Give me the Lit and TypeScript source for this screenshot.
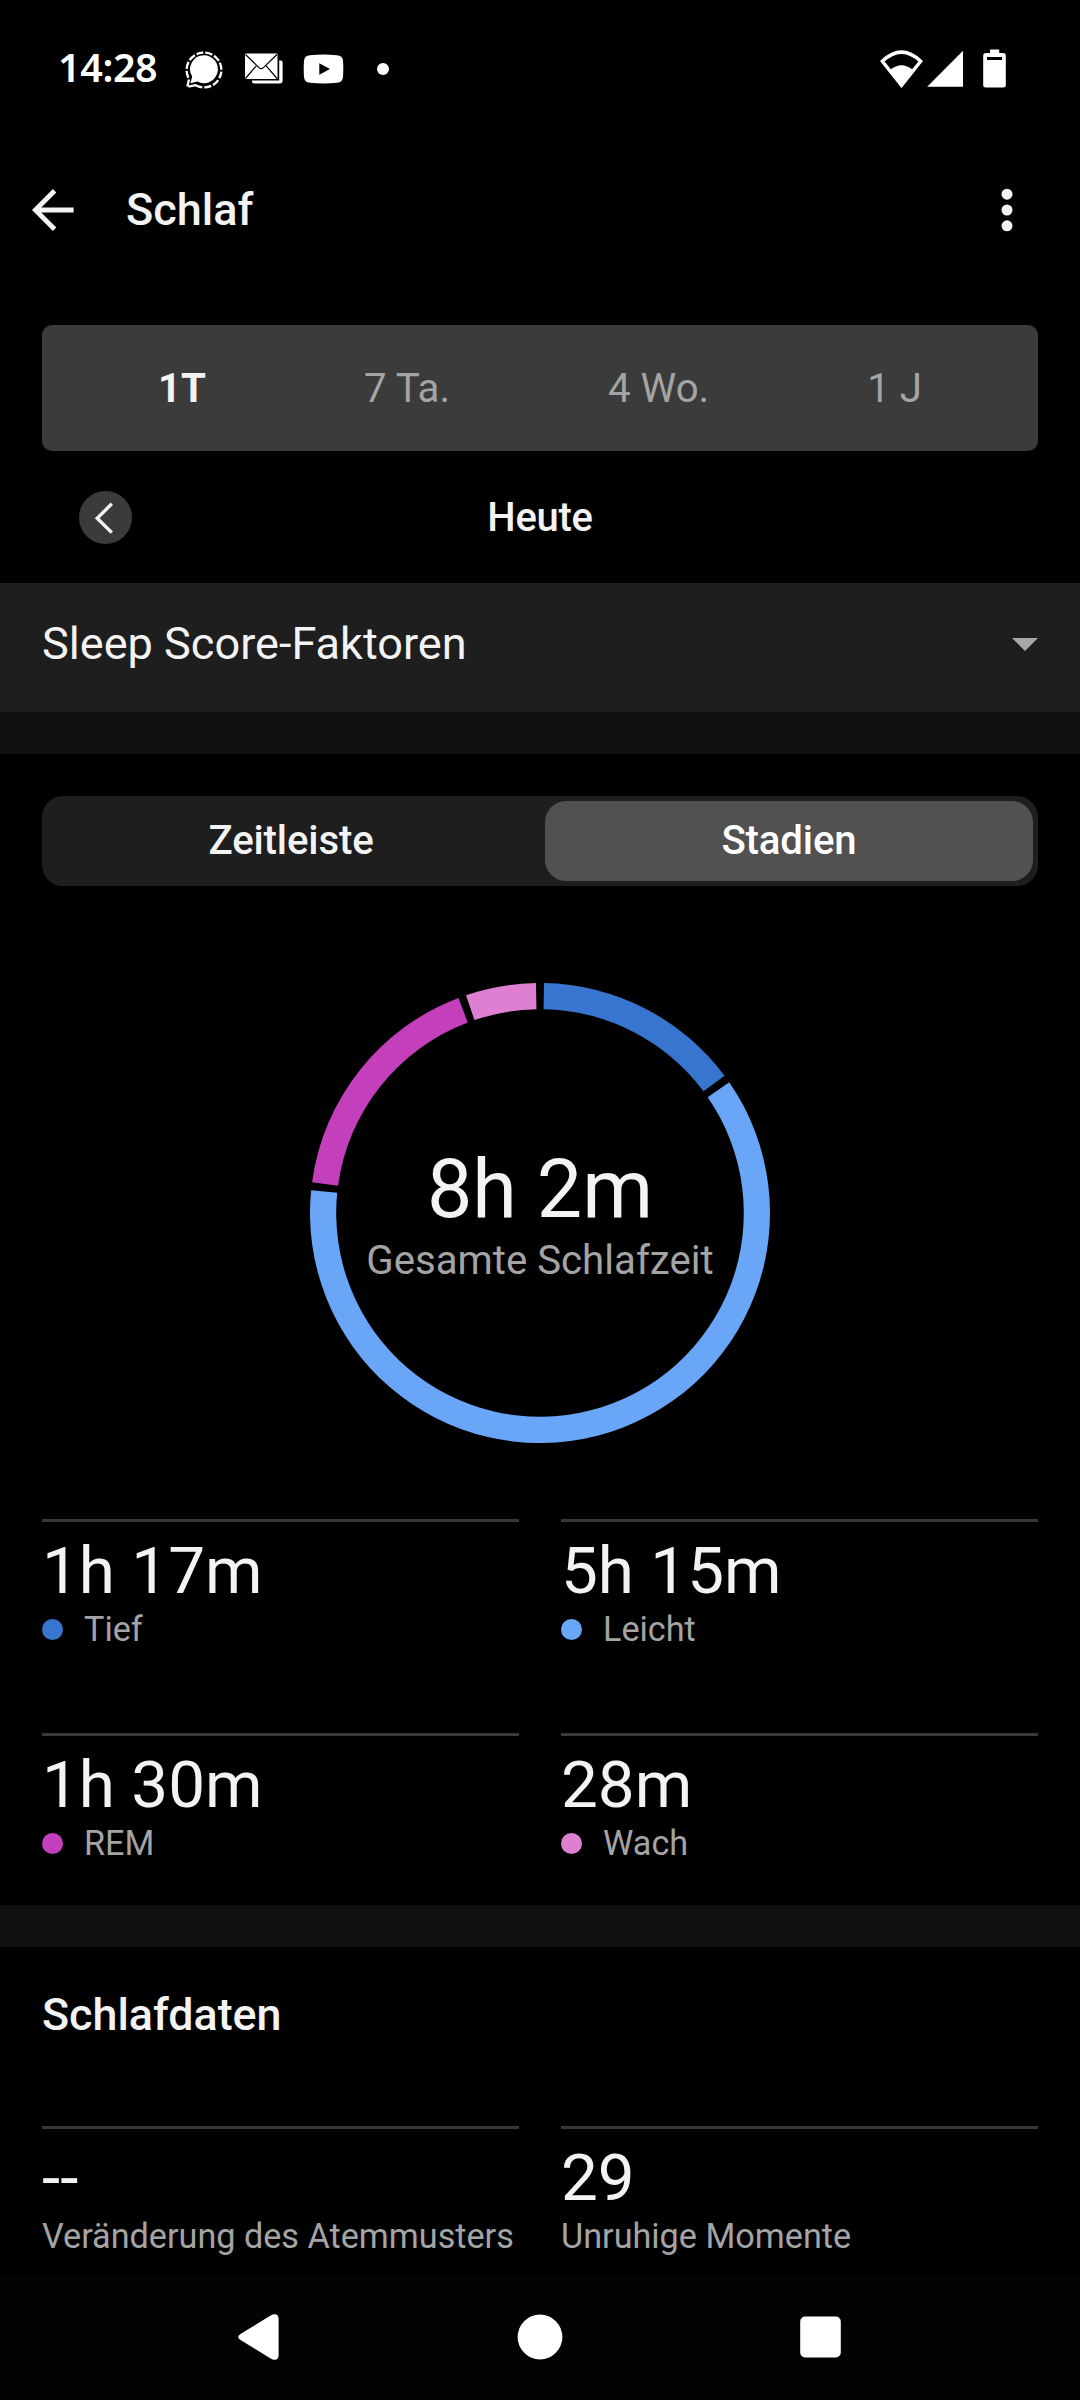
import { LitElement, html, css, svg } from "lit";
import { customElement, property } from "lit/decorators.js";

interface Stage {
  label: string;
  value: string;
  minutes: number;
  color: string;
}

const STAGES: Stage[] = [
  { label: "Tief", value: "1h 17m", minutes: 77, color: "#3875cf" },
  { label: "Leicht", value: "5h 15m", minutes: 315, color: "#6aa6f8" },
  { label: "REM", value: "1h 30m", minutes: 90, color: "#c43fbc" },
  { label: "Wach", value: "28m", minutes: 28, color: "#df7fd2" },
];

const PERIODS = ["1T", "7 Ta.", "4 Wo.", "1 J"];

@customElement("status-bar")
class StatusBar extends LitElement {
  static styles = css`
    :host {
      display: flex;
      align-items: center;
      height: 137px;
      padding: 0 74px 0 58px;
      box-sizing: border-box;
      color: #fff;
    }
    .time {
      width: 127px;
      padding-bottom: 4px;
      font: 600 39.5px/60px "Noto Sans", "Open Sans", sans-serif;
      letter-spacing: -0.4px;
      white-space: nowrap;
    }
    svg {
      display: block;
      flex: none;
    }
    .left {
      display: flex;
      align-items: center;
      gap: 20.5px;
    }
    .more {
      width: 12px;
      height: 12px;
      margin-left: 12.5px;
      border-radius: 50%;
      background: #fff;
    }
    .right {
      display: flex;
      align-items: center;
      margin-left: auto;
    }
    .cell {
      margin-left: 4px;
    }
    .battery {
      margin-left: 19px;
    }
  `;
  render() {
    return html`
      <span class="time">14:28</span>
      <div class="left">
        <svg width="38" height="40" viewBox="0 0 38 40">
          <path
            d="M19 6.2a14 14 0 1 1-6.6 26.4L5.4 34.3l1.8-6.7A14 14 0 0 1 19 6.2z"
            fill="#fff"
          />
          <path
            d="M10.5 36.2L2.2 38l1.9-8A17.4 17.4 0 1 1 10.5 36.2z"
            fill="none"
            stroke="#fff"
            stroke-width="2.3"
            stroke-dasharray="7.2 1.9"
          />
        </svg>
        <svg width="39" height="31" viewBox="0 0 39 31">
          <path d="M8 27.5h27.2V7.5H37a1.6 1.6 0 0 1 1.6 1.6v18.4a3 3 0 0 1-3 3H10a2.5 2.5 0 0 1-2-3z" fill="#fff" />
          <rect x="1" y="0.5" width="32.5" height="25.5" rx="1" fill="#fff" />
          <path
            d="M1.5 1.5L15 14.6q2.2 2 4.4 0L33 1.5M1.5 25.5L12.2 12.8M33 25.5L22.2 12.8"
            fill="none"
            stroke="#000"
            stroke-width="1.2"
          />
        </svg>
        <svg width="41" height="30" viewBox="0 0 41 30">
          <path
            d="M7 1.2q13.500-1.400 27 0Q39.600 1.400 40 7q.6 8 0 16-.4 5.600-6 5.800-13.500 1.400-27 0-5.600-.2-6-5.800-.6-8 0-16 .4-5.600 6-5.800z"
            fill="#fff"
          />
          <path d="M16.300 9.300v11.400L27 15z" fill="#000" />
        </svg>
        <span class="more"></span>
      </div>
      <div class="right">
        <svg width="43" height="38" viewBox="0 0 43 38">
          <path
            d="M2.300 11.200Q21.500-7 40.700 11.200L21.500 35.400z"
            fill="none"
            stroke="#fff"
            stroke-width="3.400"
          />
          <path d="M10.300 19.800Q21.500 10.600 32.700 19.800L21.500 36z" fill="#fff" />
        </svg>
        <svg class="cell" width="37" height="38" viewBox="0 0 37 38">
          <path d="M36 .8v36H.2z" fill="#fff" />
        </svg>
        <svg class="battery" width="23" height="39" viewBox="0 0 23 39">
          <path
            d="M7 .5h9.200V4H20a2.800 2.800 0 0 1 2.800 2.800v29.200a2.500 2.500 0 0 1-2.500 2.500H2.700A2.500 2.500 0 0 1 .2 36V6.800A2.800 2.800 0 0 1 3 4h4z"
            fill="#fff"
          />
          <path d="M4 8h15v3H4z" fill="#000" />
        </svg>
      </div>
    `;
  }
}

@customElement("sleep-donut")
class SleepDonut extends LitElement {
  @property({ attribute: false }) stages: Stage[] = [];

  static styles = css`
    :host {
      display: grid;
      width: 460px;
      height: 460px;
      justify-items: center;
    }
    .ring,
    .center {
      grid-area: 1 / 1;
    }
    .center {
      padding-top: 159px;
      text-align: center;
      white-space: nowrap;
    }
    .total {
      font-size: 80.8px;
      line-height: 95px;
      color: #f3f3f3;
    }
    .caption {
      font-size: 40.2px;
      line-height: 48px;
      color: #a4a4a4;
    }
  `;

  private arc(from: number, to: number, color: string) {
    const at = (deg: number, r: number) => {
      const a = (deg * Math.PI) / 180;
      return `${(230 + r * Math.sin(a)).toFixed(2)} ${(230 - r * Math.cos(a)).toFixed(2)}`;
    };
    const large = to - from > 180 ? 1 : 0;
    return svg`<path d="M${at(from, 230)}A230 230 0 ${large} 1 ${at(to, 230)}L${at(to, 203.8)}A203.800 203.800 0 ${large} 0 ${at(from, 203.8)}z" fill=${color} />`;
  }

  render() {
    const sum = this.stages.reduce((n, s) => n + s.minutes, 0);
    let angle = 0;
    const arcs = this.stages.map((s) => {
      const start = angle;
      angle += (s.minutes / sum) * 360;
      return this.arc(start + 1, angle - 1, s.color);
    });
    return html`
      <svg class="ring" width="460" height="460" viewBox="0 0 460 460">${arcs}</svg>
      <div class="center">
        <div class="total">8h 2m</div>
        <div class="caption">Gesamte Schlafzeit</div>
      </div>
    `;
  }
}

@customElement("stat-cell")
class StatCell extends LitElement {
  @property() value = "";
  @property() label = "";
  @property() color = "";

  static styles = css`
    :host {
      display: block;
      border-top: 3px solid #383838;
      padding-top: 10px;
      white-space: nowrap;
    }
    .value {
      font-size: 65.6px;
      line-height: 77px;
      color: #f3f3f3;
    }
    .label {
      display: flex;
      align-items: center;
      gap: 21px;
      font-size: 34.2px;
      line-height: 40px;
      color: #a4a4a4;
    }
    .dot {
      width: 21px;
      height: 21px;
      border-radius: 50%;
    }
  `;
  render() {
    return html`
      <div class="value">${this.value}</div>
      <div class="label">
        ${this.color ? html`<span class="dot" style="background:${this.color}"></span>` : ""}
        <span>${this.label}</span>
      </div>
    `;
  }
}

@customElement("app-root")
class AppRoot extends LitElement {
  static styles = css`
    :host {
      display: flex;
      flex-direction: column;
      width: 1080px;
      height: 2400px;
      overflow: hidden;
      background: #000;
      color: #f3f3f3;
      font-family: Roboto, sans-serif;
    }
    svg {
      display: block;
      flex: none;
    }
    .header {
      display: flex;
      align-items: center;
      height: 145px;
      padding: 0 67.5px 0 31px;
      box-sizing: border-box;
    }
    .title {
      flex: 1;
      margin-left: 51px;
      font-size: 45px;
      font-weight: 500;
    }
    .periods {
      display: flex;
      justify-content: space-between;
      align-items: center;
      height: 126px;
      margin: 43px 42px 0;
      padding: 0 116px;
      box-sizing: border-box;
      border-radius: 10px;
      background: #3b3b3b;
      color: #a4a4a4;
      font-size: 40.2px;
    }
    .active {
      color: #f3f3f3;
      font-weight: 700;
    }
    .date {
      display: grid;
      grid-template-columns: 53px 1fr 53px;
      align-items: center;
      height: 132px;
      padding: 0 79px;
      text-align: center;
      font-size: 40px;
      font-weight: 500;
      letter-spacing: -0.3px;
    }
    .prev {
      display: grid;
      place-items: center;
      width: 53px;
      height: 53px;
      border-radius: 50%;
      background: #3b3b3b;
    }
    .factors {
      display: flex;
      justify-content: space-between;
      align-items: center;
      height: 129px;
      padding: 0 42px 8px;
      box-sizing: border-box;
      background: #1e1e1e;
      font-size: 45.1px;
    }
    .caret {
      margin-top: 2px;
    }
    .divider {
      height: 42px;
      background: #101010;
    }
    .tabs {
      display: grid;
      grid-template-columns: 1fr 1fr;
      height: 90px;
      margin: 42px 42px 0;
      padding: 5px;
      gap: 10px;
      box-sizing: border-box;
      border-radius: 21px;
      background: #1e1e1e;
      font-size: 40.2px;
      font-weight: 500;
      letter-spacing: -0.15px;
      line-height: 80px;
      text-align: center;
    }
    .selected {
      border-radius: 21px;
      background: #515151;
      color: #fff;
    }
    .chart {
      display: flex;
      justify-content: center;
      padding: 97px 0 76px;
    }
    .stats {
      display: grid;
      grid-template-columns: 1fr 1fr;
      grid-auto-rows: 130px;
      gap: 84px 42px;
      padding: 0 42px;
    }
    .stages {
      padding-bottom: 42px;
    }
    .section {
      height: 179px;
      padding: 41px 42px 0;
      box-sizing: border-box;
      font-size: 44.8px;
      font-weight: 500;
      line-height: 54px;
    }
    .nav {
      display: flex;
      align-items: center;
      justify-content: space-between;
      height: 126px;
      margin-top: auto;
      padding: 0 239px 0 237px;
      background: #030303;
    }
  `;

  render() {
    return html`
      <status-bar></status-bar>
      <header class="header">
        <svg width="44" height="44" viewBox="0 0 44 44" fill="none" stroke="#f3f3f3" stroke-width="4.800">
          <path d="M23.600 2.800L4.400 22l19.200 19.200M4.400 22H42.600" />
        </svg>
        <div class="title">Schlaf</div>
        <svg width="12" height="44" viewBox="0 0 12 44" fill="#f3f3f3">
          <circle cx="6" cy="6.200" r="5.500" />
          <circle cx="6" cy="22" r="5.500" />
          <circle cx="6" cy="37.800" r="5.500" />
        </svg>
      </header>
      <div class="periods">
        ${PERIODS.map((p, i) => html`<span class=${i === 0 ? "active" : ""}>${p}</span>`)}
      </div>
      <div class="date">
        <span class="prev">
          <svg width="53" height="53" viewBox="0 0 53 53" fill="none" stroke="#f3f3f3" stroke-width="3.400">
            <path d="M32.800 12.800L18.200 27.200l14.600 14.400" />
          </svg>
        </span>
        <span>Heute</span>
      </div>
      <div class="factors">
        <span>Sleep Score-Faktoren</span>
        <svg class="caret" width="26" height="13" viewBox="0 0 26 13"><path d="M0 0h26L13 13z" fill="#a8a8a8" /></svg>
      </div>
      <div class="divider"></div>
      <div class="tabs">
        <span>Zeitleiste</span>
        <span class="selected">Stadien</span>
      </div>
      <div class="chart"><sleep-donut .stages=${STAGES}></sleep-donut></div>
      <div class="stats stages">
        ${STAGES.map(
          (s) => html`<stat-cell .value=${s.value} .label=${s.label} .color=${s.color}></stat-cell>`
        )}
      </div>
      <div class="divider"></div>
      <div class="section">Schlafdaten</div>
      <div class="stats">
        <stat-cell value="--" label="Veränderung des Atemmusters"></stat-cell>
        <stat-cell value="29" label="Unruhige Momente"></stat-cell>
      </div>
      <nav class="nav">
        <svg width="43" height="46" viewBox="0 0 43 46" fill="#fff">
          <path d="M34 1.200Q36 0 38.500.3 41.600 1 41.600 5v36q0 4-3.100 4.700-2.500.3-4.500-.9L3.500 26Q1.200 24.700 1.200 23t2.300-3z" />
        </svg>
        <svg width="46" height="46" viewBox="0 0 46 46" fill="#fff"><circle cx="23" cy="23" r="22.400" /></svg>
        <svg width="41" height="42" viewBox="0 0 41 42" fill="#fff"><rect x=".2" y=".5" width="40.600" height="41" rx="5" /></svg>
      </nav>
    `;
  }
}
